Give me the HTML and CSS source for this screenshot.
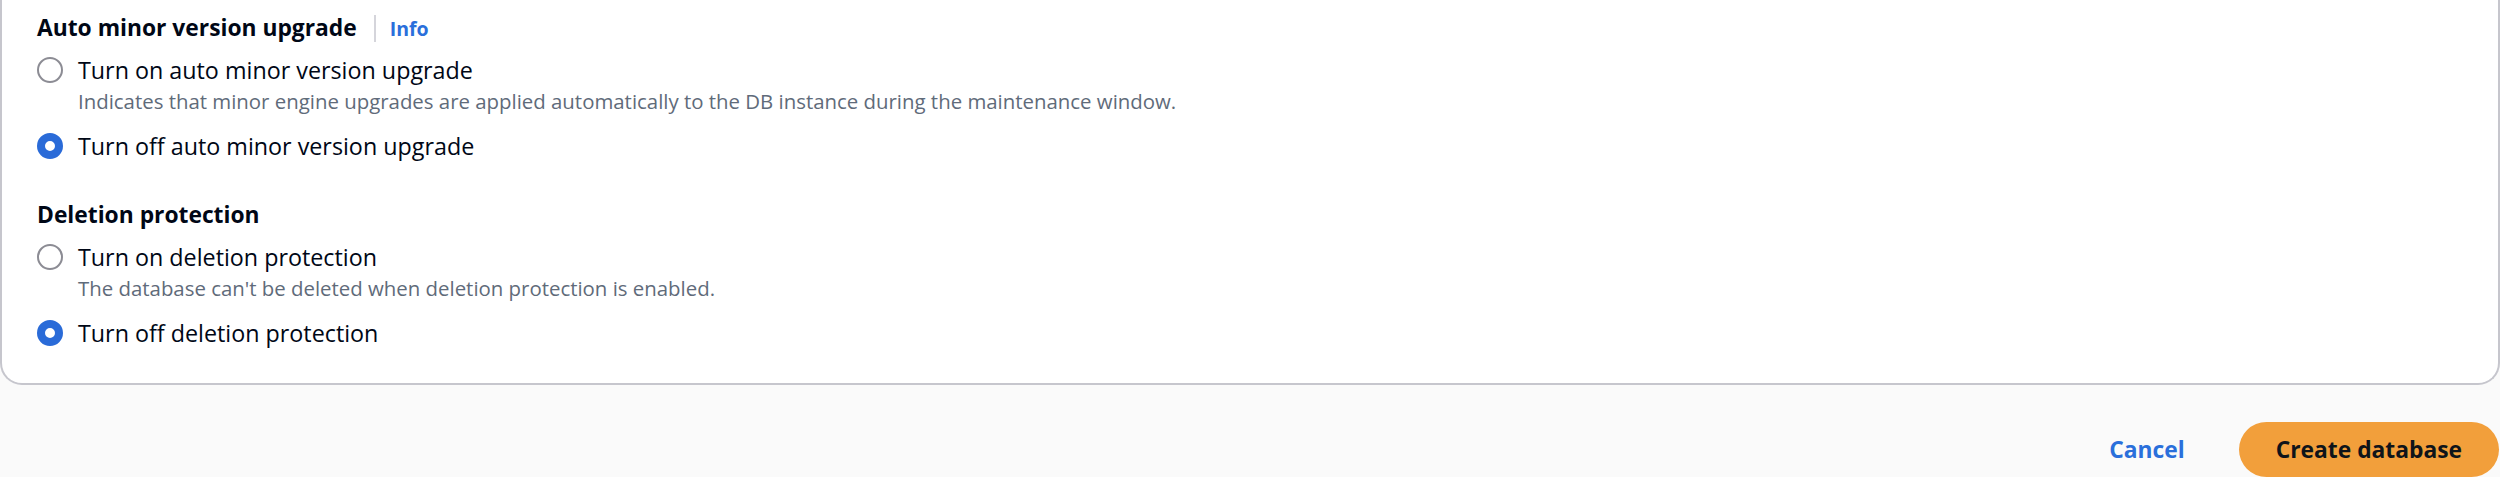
FILE: index.html
```html
<!DOCTYPE html>
<html lang="en">
<head>
<meta charset="utf-8">
<title>Create database</title>
<link rel="stylesheet" href="styles.css">
</head>
<body>
<div class="card">
  <div class="field">
    <div class="field-label">
      <span class="label-text">Auto minor version upgrade</span>
      <span class="divider"></span>
      <a class="info" href="#">Info</a>
    </div>
    <div class="radio-row">
      <span class="radio"></span>
      <div class="radio-text">
        <div class="radio-label">Turn on auto minor version upgrade</div>
        <div class="radio-desc">Indicates that minor engine upgrades are applied automatically to the DB instance during the maintenance window.</div>
      </div>
    </div>
    <div class="radio-row">
      <span class="radio checked"></span>
      <div class="radio-text">
        <div class="radio-label">Turn off auto minor version upgrade</div>
      </div>
    </div>
  </div>
  <div class="field second">
    <div class="field-label">
      <span class="label-text">Deletion protection</span>
    </div>
    <div class="radio-row">
      <span class="radio"></span>
      <div class="radio-text">
        <div class="radio-label">Turn on deletion protection</div>
        <div class="radio-desc">The database can't be deleted when deletion protection is enabled.</div>
      </div>
    </div>
    <div class="radio-row">
      <span class="radio checked"></span>
      <div class="radio-text">
        <div class="radio-label">Turn off deletion protection</div>
      </div>
    </div>
  </div>
</div>
<div class="footer">
  <button class="btn-link">Cancel</button>
  <button class="btn-primary">Create database</button>
</div>
</body>
</html>
```
FILE: styles.css
```css
* { box-sizing: border-box; }
html, body {
  margin: 0;
  padding: 0;
  background: #fafafa;
  font-family: "Open Sans", "Noto Sans", sans-serif;
  color: #000716;
}
.card {
  background: #ffffff;
  border: 2px solid #c6c6cd;
  border-top: none;
  border-radius: 0 0 22px 22px;
  padding: 12px 36px 34px 35px;
  width: 2500px;
}
.field-label {
  display: flex;
  align-items: center;
  height: 32px;
  margin-bottom: 10px;
}
.label-text {
  font-weight: 700;
  font-size: 22.8px;
  line-height: 32px;
}
.divider {
  width: 2px;
  height: 27px;
  background: #d5d5db;
  margin: 0 14px 0 17px;
}
.info {
  color: #2a6fdb;
  font-weight: 700;
  font-size: 19.5px;
  text-decoration: none;
}
.second { margin-top: 37px; }
.radio-row {
  display: flex;
  align-items: flex-start;
  gap: 15px;
}
.radio-row + .radio-row { margin-top: 15px; }
.radio {
  flex: none;
  width: 26px;
  height: 26px;
  margin-top: 3px;
  border-radius: 50%;
  border: 2px solid #8c8c94;
  background: #fff;
}
.radio.checked {
  border: 8.5px solid #2a6bd8;
}
.radio-label {
  font-size: 23.3px;
  line-height: 32px;
}
.radio-desc {
  font-size: 20.4px;
  line-height: 28px;
  color: #5f6b7a;
  margin-top: 1px;
}
.footer {
  display: flex;
  justify-content: flex-end;
  align-items: center;
  gap: 17px;
  padding-top: 37px;
}
.footer button {
  font-family: "Open Sans", "Noto Sans", sans-serif;
  font-weight: 700;
  font-size: 22.8px;
  height: 55px;
  border-radius: 28px;
  padding: 0 37px;
  border: none;
  cursor: pointer;
}
.btn-link {
  background: transparent;
  color: #2a6fdb;
}
.btn-primary {
  background: #f29f3b;
  color: #0f141a;
  margin-right: 1px;
}
```
